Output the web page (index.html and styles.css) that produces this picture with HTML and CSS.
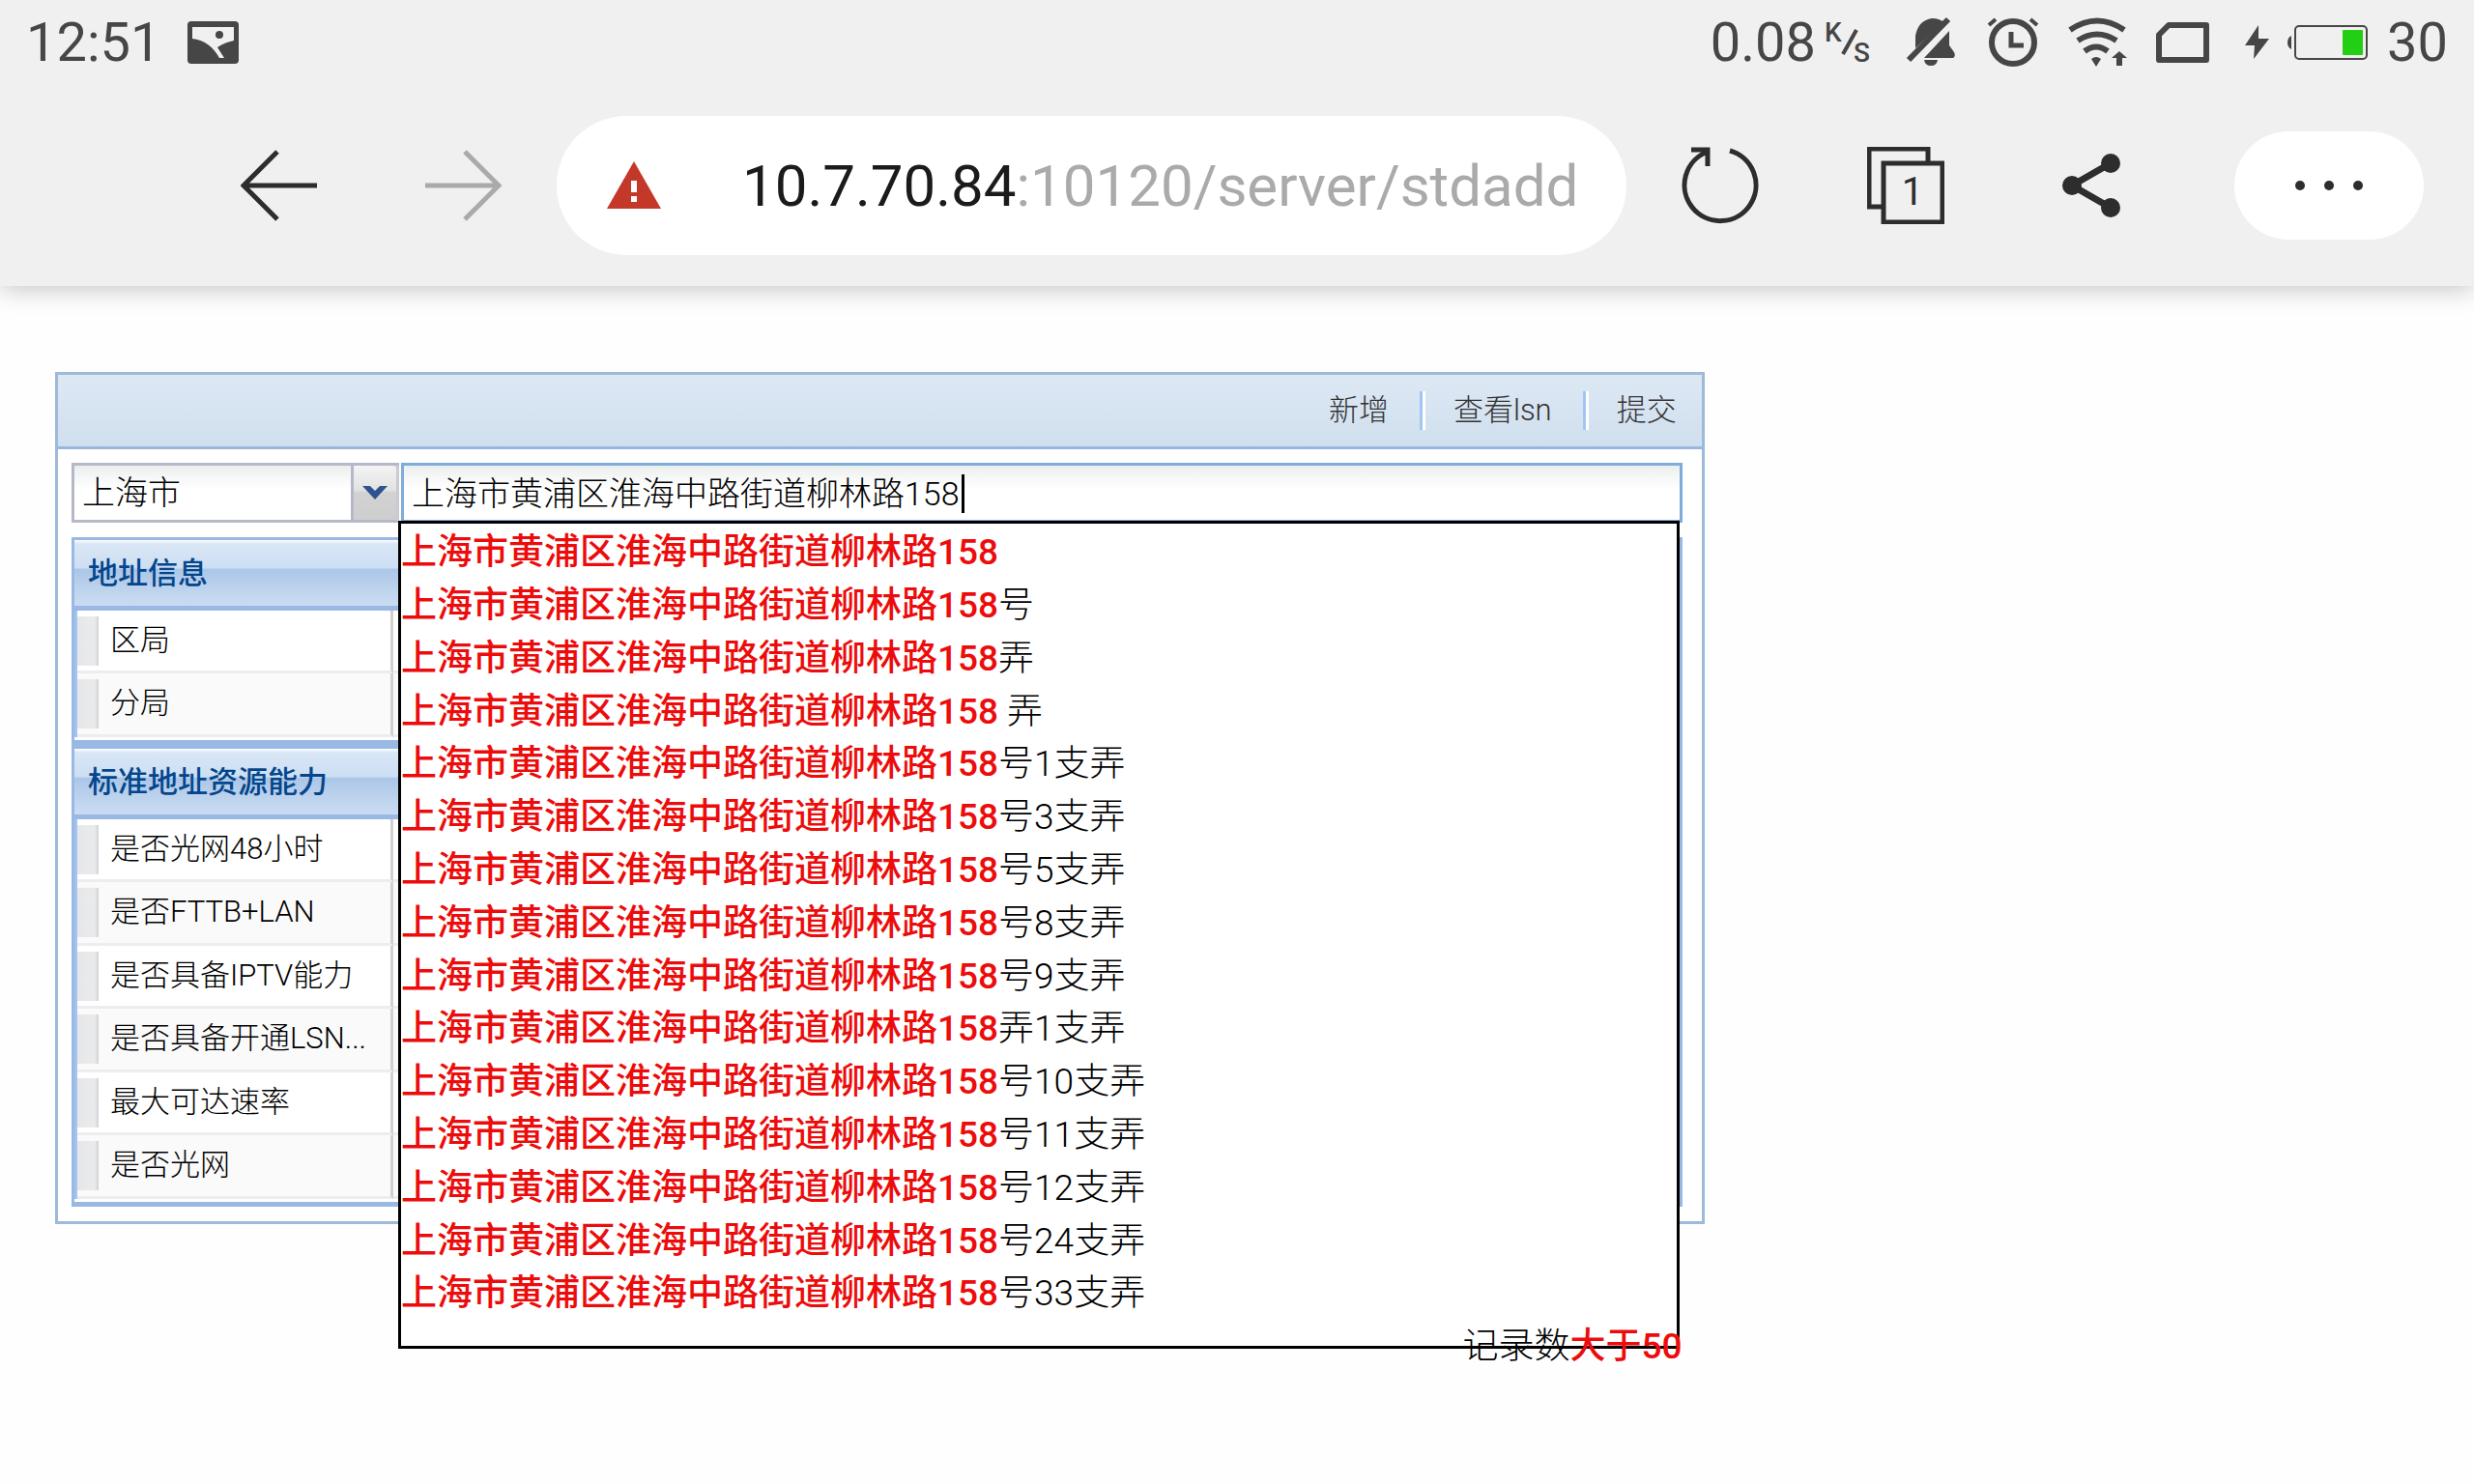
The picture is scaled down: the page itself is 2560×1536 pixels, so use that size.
FILE: index.html
```html
<!DOCTYPE html>
<html lang="zh-CN">
<head>
<meta charset="utf-8">
<title>标准地址</title>
<link rel="stylesheet" href="styles.css">
</head>
<body>
<header class="chrome">
  <div class="status">
    <div class="status-left">
      <time>12:51</time>
      <svg width="53" height="44" viewBox="0 0 53 44" aria-hidden="true">
        <rect width="53" height="44" rx="4" fill="#464646"/>
        <path d="M5 6H48V20Q38 22 31 27L38 38H33Q23 20 5 18Z" fill="#f0f0f0"/>
        <circle cx="33" cy="14" r="4" fill="#464646"/>
      </svg>
    </div>
    <div class="status-right">
      <span class="speed">0.08</span>
      <svg class="unit" width="52" height="52" viewBox="0 0 52 52">
        <text x="1" y="25">K</text><text x="31" y="46">S</text>
        <path d="M34 13L20 38" stroke="#464646" stroke-width="4"/>
      </svg>
      <div class="icons">
        <svg width="64" height="56" viewBox="0 0 64 56" aria-hidden="true" fill="#464646">
          <path d="M16 34V21Q19 5 33 3Q41 3 45 7Z"/>
          <path d="M25 44L51 16V31L56 38Q58 42 55 44Z"/>
          <path d="M25 46H39Q38 52 32 52T25 46Z"/>
          <path d="M9 46L50 4" stroke="#464646" stroke-width="6"/>
        </svg>
        <svg width="64" height="56" viewBox="0 0 64 56" aria-hidden="true" fill="none" stroke="#464646">
          <circle cx="30" cy="28" r="22" stroke-width="6"/>
          <path d="M28 17V31H41" stroke-width="5"/>
          <path d="M5 10L12 4M48 4L55 10" stroke-width="4"/>
        </svg>
        <svg width="64" height="56" viewBox="0 0 64 56" aria-hidden="true" fill="none" stroke="#464646" stroke-width="6">
          <path d="M2 15Q30 -4 58 15M10 26Q30 13 50 26M17 37Q29 28 41 37"/>
          <path d="M29 53L24 45Q29 41 34 45Z" fill="#464646" stroke="none"/>
          <path d="M53 37L45 44H61Z" fill="#464646" stroke="none"/>
          <path d="M53 52V42"/>
        </svg>
        <svg width="64" height="56" viewBox="0 0 64 56" aria-hidden="true">
          <path d="M17 10H56V46H7V20Z" fill="none" stroke="#464646" stroke-width="6" stroke-linejoin="round"/>
        </svg>
      </div>
      <svg class="battery" width="127" height="56" viewBox="0 0 127 56" aria-hidden="true">
        <path d="M14 10L0 31H10L9 45L25 24H14Z" fill="#464646"/>
        <path d="M48 21Q44 23 44 28T48 35Z" fill="#464646"/>
        <rect x="52" y="11" width="74" height="34" rx="4" fill="none" stroke="#464646" stroke-width="2"/>
        <rect x="101" y="15" width="21" height="26" rx="1" fill="#22cf14"/>
      </svg>
      <span>30</span>
    </div>
  </div>
  <nav class="nav">
    <button class="tool back" aria-label="后退">
      <svg width="80" height="80" viewBox="0 0 80 80"><path d="M79 40H3M38 5L3 40L38 75"/></svg>
    </button>
    <button class="tool forward" aria-label="前进" disabled>
      <svg width="80" height="80" viewBox="0 0 80 80"><path d="M0 40H76M41 5L76 40L41 75"/></svg>
    </button>
    <div class="address">
      <svg width="56" height="50" viewBox="0 0 56 50" aria-hidden="true">
        <path d="M28 0L56 49H0Z" fill="#c43829"/>
        <path d="M25 20H31V32H25ZM25 36H31V42H25Z" fill="#fff"/>
      </svg>
      <div class="url"><span class="host">10.7.70.84</span>:10120/server/stdadd</div>
    </div>
    <div class="actions">
      <button class="tool" aria-label="刷新">
        <svg width="80" height="80" viewBox="0 0 80 80"><path d="M50 4A37 37 0 1 1 27 5M10 3H27V20"/></svg>
      </button>
      <button class="tool" aria-label="标签页">
        <svg width="80" height="80" viewBox="0 0 80 80"><path d="M17 62H2V2H63V17M17 17H78V78H17Z"/><text x="47" y="60">1</text></svg>
      </button>
      <button class="tool" aria-label="分享">
        <svg width="80" height="80" viewBox="0 0 80 80"><path class="thick" d="M60 17L20 40L60 63"/><g class="dots"><circle cx="60" cy="17" r="10"/><circle cx="20" cy="40" r="10"/><circle cx="60" cy="63" r="10"/></g></svg>
      </button>
    </div>
    <button class="more" aria-label="更多">
      <svg width="80" height="20" viewBox="0 0 80 20"><circle cx="10" cy="10" r="5"/><circle cx="40" cy="10" r="5"/><circle cx="70" cy="10" r="5"/></svg>
    </button>
  </nav>
</header>

<main>
  <section class="panel">
    <div class="toolbar">
      <button>新增</button>
      <button>查看lsn</button>
      <button>提交</button>
    </div>
    <div class="panel-body">
      <form class="search">
        <div class="city">
          <select aria-label="城市"><option>上海市</option></select>
          <span class="trigger"><svg width="28" height="16" viewBox="0 0 28 16" aria-hidden="true"><path d="M1 1H9L14 6L19 1H27L14 15Z" fill="#2f538f"/></svg></span>
        </div>
        <div class="query">
          <input type="text" aria-label="地址" value="上海市黄浦区淮海中路街道柳林路158">
          <span class="caret"></span>
          <div class="suggest">
            <ul>
              <li><b>上海市黄浦区淮海中路街道柳林路158</b></li>
              <li><b>上海市黄浦区淮海中路街道柳林路158</b>号</li>
              <li><b>上海市黄浦区淮海中路街道柳林路158</b>弄</li>
              <li><b>上海市黄浦区淮海中路街道柳林路158</b> 弄</li>
              <li><b>上海市黄浦区淮海中路街道柳林路158</b>号1支弄</li>
              <li><b>上海市黄浦区淮海中路街道柳林路158</b>号3支弄</li>
              <li><b>上海市黄浦区淮海中路街道柳林路158</b>号5支弄</li>
              <li><b>上海市黄浦区淮海中路街道柳林路158</b>号8支弄</li>
              <li><b>上海市黄浦区淮海中路街道柳林路158</b>号9支弄</li>
              <li><b>上海市黄浦区淮海中路街道柳林路158</b>弄1支弄</li>
              <li><b>上海市黄浦区淮海中路街道柳林路158</b>号10支弄</li>
              <li><b>上海市黄浦区淮海中路街道柳林路158</b>号11支弄</li>
              <li><b>上海市黄浦区淮海中路街道柳林路158</b>号12支弄</li>
              <li><b>上海市黄浦区淮海中路街道柳林路158</b>号24支弄</li>
              <li><b>上海市黄浦区淮海中路街道柳林路158</b>号33支弄</li>
            </ul>
            <p class="count">记录数<b>大于50</b></p>
          </div>
        </div>
      </form>
      <div class="groups">
        <section class="group">
          <h2>地址信息</h2>
          <table>
            <tr><th scope="row"><span>区局</span></th><td></td></tr>
            <tr><th scope="row"><span>分局</span></th><td></td></tr>
          </table>
        </section>
        <section class="group">
          <h2>标准地址资源能力</h2>
          <table>
            <tr><th scope="row"><span>是否光网48小时</span></th><td></td></tr>
            <tr><th scope="row"><span>是否FTTB+LAN</span></th><td></td></tr>
            <tr><th scope="row"><span>是否具备IPTV能力</span></th><td></td></tr>
            <tr><th scope="row"><span>是否具备开通LSN...</span></th><td></td></tr>
            <tr><th scope="row"><span>最大可达速率</span></th><td></td></tr>
            <tr><th scope="row"><span>是否光网</span></th><td></td></tr>
          </table>
        </section>
      </div>
    </div>
  </section>
</main>
</body>
</html>
```
FILE: styles.css
```css
* { box-sizing: border-box; }

body {
  min-height: 100vh;
  margin: 0;
  background: #fefefe;
  color: #000;
  font-family: Roboto, "Noto Sans CJK SC", sans-serif;
  font-weight: 300;
}

button {
  padding: 0;
  border: 0;
  background: none;
  font: inherit;
  color: inherit;
}

svg { display: block; flex: none; }

/* Phone status bar and browser bar */
.chrome {
  background: #f0f0f0;
  box-shadow: 0 4px 24px rgba(0, 0, 0, 0.22);
  font-weight: 400;
}

.status {
  display: flex;
  justify-content: space-between;
  align-items: center;
  height: 88px;
  padding: 0 27px;
  color: #464646;
  font-size: 56px;
  line-height: 64px;
}

.status-left,
.status-right,
.icons { display: flex; align-items: center; }

.status-left { gap: 28px; }
.icons { gap: 23px; margin: 0 32px 0 27px; }
.unit { margin-left: 8px; }
.unit text { font-size: 28px; font-weight: 500; fill: #464646; }
.battery { margin-right: 20px; }

.nav {
  display: flex;
  align-items: center;
  height: 208px;
  padding: 0 52px 0 249px;
}

.tool svg {
  fill: none;
  stroke: #2d2d2d;
  stroke-width: 5px;
}

.tool text { fill: #2d2d2d; stroke: none; font-size: 40px; text-anchor: middle; }
.tool .thick { stroke-width: 7px; }
.tool .dots { fill: #2d2d2d; stroke: none; }
.back { margin-right: 111px; }
.forward { margin-right: 56px; }
.forward svg { stroke: #aaa; }

.address {
  display: flex;
  flex: 1;
  align-items: center;
  gap: 84px;
  height: 144px;
  padding: 0 44px 0 52px;
  border-radius: 72px;
  background: #fff;
  min-width: 0;
}

.url { padding-top: 2px; color: #aaa; font-size: 60px; line-height: 72px; white-space: nowrap; }
.host { color: #1b1b1b; }

.actions { display: flex; gap: 112px; margin: 0 108px 0 57px; }

.more {
  display: flex;
  align-items: center;
  justify-content: center;
  width: 196px;
  height: 112px;
  border-radius: 56px;
  background: #fff;
}

.more svg { fill: #2d2d2d; }

/* Address panel */
.panel {
  width: calc(100% * 2 / 3);
  margin: 89px 0 0 57px;
  border: 3px solid #9ebadb;
  background: #fff;
}

.toolbar {
  display: flex;
  align-items: center;
  justify-content: flex-end;
  height: 77px;
  padding-right: 26px;
  border-bottom: 3px solid #99b7dc;
  background: linear-gradient(#dde8f4, #d0dfee);
  color: #333;
  font-size: 31px;
  line-height: 40px;
}

.toolbar button + button {
  margin-left: 32px;
  padding-left: 32px;
  border-left: 3px solid #a0c6f3;
  box-shadow: inset 3px 0 #fff;
}

.panel-body {
  display: grid;
  gap: 15px;
  padding: 14px 20px 15px 14px;
}

.search { display: flex; gap: 2px; margin: 0; }
.city { position: relative; width: 339px; }
.query { position: relative; flex: 1; }

.search select,
.search input {
  width: 100%;
  height: 62px;
  border: 3px solid #b5b8c8;
  border-radius: 0;
  outline: 0;
  background: linear-gradient(#eceeee, #fff 24px);
  color: #000;
  font: inherit;
  font-size: 34px;
}

.search select { appearance: none; padding: 0 8px; }
.search input { border-color: #7eadd9; padding: 0 8px 4px; }

.trigger {
  position: absolute;
  top: 0;
  right: 0;
  display: grid;
  place-items: center;
  width: 50px;
  height: 62px;
  border: 3px solid #b5b8c8;
  border-right-color: #c9cad2;
  border-top-right-radius: 6px;
  background: linear-gradient(#f4f4f4, #e2e2e2 45%, #d2d2d2 50%, #cecece);
  pointer-events: none;
}

.caret {
  position: absolute;
  top: 12px;
  left: 580px;
  width: 3px;
  height: 40px;
  background: #000;
}

.suggest {
  position: absolute;
  z-index: 1;
  top: 60px;
  right: 3px;
  left: -3px;
  border: 3px solid #000;
  background: #fff;
  font-size: 37px;
}

.suggest ul { margin: 0; padding: 2px 0 0; list-style: none; }
.suggest li,
.count { line-height: 55px; white-space: nowrap; }
.suggest li:nth-child(5n) { line-height: 54px; }
.suggest b { color: #ec0c0c; font-weight: 500; }
.count { margin: 0 -6px -28px 0; text-align: right; }

.groups { border: 3px solid #99b9e4; border-bottom-width: 5px; }

.group h2 {
  height: 73px;
  margin: 0;
  padding: 0 14px;
  border-bottom: 5px solid #99b9e4;
  background: linear-gradient(#fff 0, #d9e6f5 4px, #cddff3 42%, #aac6e8 45%, #b5cdea 60%, #cadcf3);
  color: #04468c;
  font-size: 31px;
  font-weight: 500;
  line-height: 70px;
}

.group + .group { border-top: 9px solid #99b9e4; }

.group table {
  width: 100%;
  margin-bottom: 3px;
  border-left: 3px solid #a3c3ef;
  border-collapse: separate;
  border-spacing: 0;
  table-layout: fixed;
}

.group tr { height: 65px; }
.group tr:nth-child(even) { height: 66px; background: #fafafa; }

.group th,
.group td { padding: 0; border-bottom: 3px solid #ededed; }

.group th {
  width: 327px;
  border-right: 3px solid #d0d0d0;
  font-size: 31px;
  font-weight: 300;
  text-align: left;
}

.group th span {
  display: block;
  padding: 0 0 2px 34px;
  background: linear-gradient(90deg, #e4e7ea, #ebebec 18px, #cfd1d1 22px) no-repeat left / 22px 100%;
  line-height: 49px;
  white-space: nowrap;
}
```
